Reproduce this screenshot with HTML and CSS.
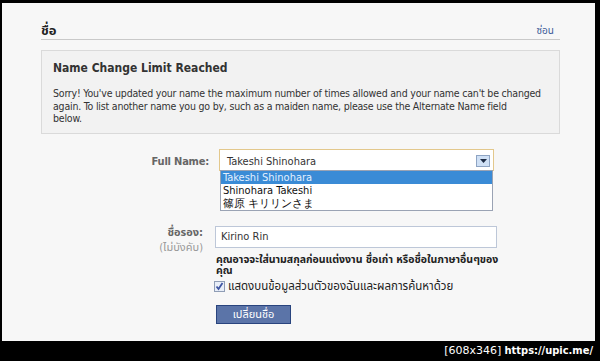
FILE: index.html
```html
<!DOCTYPE html>
<html lang="th">
<head>
<meta charset="utf-8">
<title>ชื่อ</title>
<link rel="stylesheet" href="styles.css">
</head>
<body>
<div class="frame">
  <div class="panel">
    <div class="head">
      <h2 class="head-title">ชื่อ</h2>
      <a class="head-link" href="#">ซ่อน</a>
    </div>
    <div class="notice">
      <h3 class="notice-title">Name Change Limit Reached</h3>
      <p class="notice-text">Sorry! You've updated your name the maximum number of times allowed and your name can't be changed again. To list another name you go by, such as a maiden name, please use the Alternate Name field<br>below.</p>
    </div>
    <div class="form">
      <div class="label label-full">Full Name:</div>
      <div class="field field-select">
        <div class="select">
          <span class="select-value">Takeshi Shinohara</span>
          <span class="select-btn"><svg width="9" height="6" viewBox="0 0 9 6"><path d="M1 1h7L4.5 5z" fill="#1d2b44"/></svg></span>
        </div>
        <ul class="options">
          <li class="opt opt-active">Takeshi Shinohara</li>
          <li class="opt">Shinohara Takeshi</li>
          <li class="opt">篠原 キリリンさま</li>
        </ul>
      </div>
      <div class="label label-alt">
        <div class="label-main">ชื่อรอง:</div>
        <div class="label-sub">(ไม่บังคับ)</div>
      </div>
      <div class="field field-alt">
        <div class="input">Kirino Rin</div>
        <p class="help">คุณอาจจะใส่นามสกุลก่อนแต่งงาน ชื่อเก่า หรือชื่อในภาษาอื่นๆของ<br>คุณ</p>
        <label class="check">
          <span class="check-box"><svg width="9" height="9" viewBox="0 0 9 9"><path d="M1.5 4.5l2 2.5 4-6" fill="none" stroke="#3f56a3" stroke-width="1.8"/></svg></span>
          <span class="check-text">แสดงบนข้อมูลส่วนตัวของฉันและผลการค้นหาด้วย</span>
        </label>
        <button class="btn" type="button">เปลี่ยนชื่อ</button>
      </div>
    </div>
  </div>
  <div class="stamp"><span class="stamp-size">[608x346]</span> <span class="stamp-url">https://upic.me/</span></div>
</div>
</body>
</html>
```
FILE: styles.css
```css
* { box-sizing: border-box; }
html, body { margin: 0; padding: 0; }
body {
  background: #000;
  font-family: "DejaVu Sans Condensed", "DejaVu Sans", "Noto Sans Thai", "Loma", sans-serif;
  color: #333;
  width: 600px;
  height: 361px;
  overflow: hidden;
}
.frame {
  padding: 3px 5px 0 2px;
  height: 361px;
  display: flex;
  flex-direction: column;
}
.panel {
  background: #f7f7f7;
  height: 338px;
  padding: 0 35px 0 39px;
  position: relative;
}
.head {
  display: flex;
  justify-content: space-between;
  align-items: flex-end;
  padding-top: 20px;
  border-bottom: 1px solid #c9c9c9;
  height: 37px;
}
.head-title {
  margin: 0;
  font-size: 13px;
  font-weight: bold;
  line-height: 16px;
  color: #222;
}
.head-link {
  font-size: 10px;
  line-height: 16px;
  color: #3b5998;
  text-decoration: none;
  margin-right: 6px;
}
.notice {
  margin-top: 10px;
  border: 1px solid #dadada;
  background: #f2f2f2;
  height: 84px;
  padding: 8px 10px 0 11px;
}
.notice-title {
  margin: 0;
  font-size: 12px;
  line-height: 18px;
  font-weight: bold;
  color: #333;
}
.notice-text {
  margin: 10px 0 0 0;
  font-size: 10.5px;
  letter-spacing: -0.2px;
  line-height: 12.6px;
  color: #333;
}
.form {
  display: grid;
  grid-template-columns: 168px 1fr;
  column-gap: 6px;
  margin-top: 15px;
}
.label {
  text-align: right;
  font-size: 11px;
  font-weight: bold;
  color: #666;
}
.label-full { padding-top: 6px; letter-spacing: -0.2px; }
.label-alt { padding-right: 6px; padding-top: 55px; }
.label-main { line-height: 14px; }
.label-sub { font-weight: normal; color: #999; line-height: 16px; }
.field-select { position: relative; padding-left: 4px; }
.select {
  width: 275px;
  height: 22px;
  border: 1px solid #e3c88c;
  background: #fff;
  display: flex;
  align-items: center;
  justify-content: space-between;
  padding: 2px 3px 0 7px;
  font-size: 11px;
}
.select-btn {
  width: 14px;
  height: 12px;
  border: 1px solid #8ea4c3;
  background: #cfe0f5;
  display: flex;
  align-items: center;
  justify-content: center;
}
.options {
  position: absolute;
  left: 5px;
  top: 21px;
  width: 273px;
  margin: 0;
  padding: 0;
  list-style: none;
  background: #fff;
  border: 1px solid #9aa3b4;
  font-size: 11px;
}
.opt {
  height: 13px;
  line-height: 13px;
  padding-left: 2px;
  color: #111;
}
.opt-active { background: #3a8bd6; color: #e3f0ff; }
.field-alt { padding-top: 55px; }
.input {
  width: 282px;
  height: 22px;
  border: 1px solid #bdc7d8;
  background: #fff;
  font-size: 11px;
  line-height: 20px;
  padding-left: 5px;
}
.help {
  margin: 6px 0 0 1px;
  font-size: 10.5px;
  line-height: 11px;
  font-weight: bold;
  color: #222;
  white-space: nowrap;
}
.check {
  display: flex;
  align-items: center;
  gap: 3px;
  margin-top: 2px;
  font-size: 11.5px;
  color: #222;
}
.check-box {
  width: 11px;
  height: 11px;
  margin-left: -1px;
  border: 1px solid #8f9db5;
  background: #e8eef8;
  display: flex;
  align-items: center;
  justify-content: center;
}
.btn {
  margin-top: 10px;
  margin-left: 1px;
  width: 75px;
  height: 19px;
  border: 1px solid #29447e;
  background: #5b74a8;
  color: #fff;
  font-family: inherit;
  font-size: 11px;
  padding: 0;
}
.stamp {
  flex: 1;
  text-align: right;
  color: #fff;
  font-size: 11px;
  line-height: 20px;
  padding-right: 2px;
}
.stamp-size { font-family: "DejaVu Sans", sans-serif; }
.stamp-url { font-family: "DejaVu Sans Condensed", "DejaVu Sans", sans-serif; font-weight: bold; }
```
